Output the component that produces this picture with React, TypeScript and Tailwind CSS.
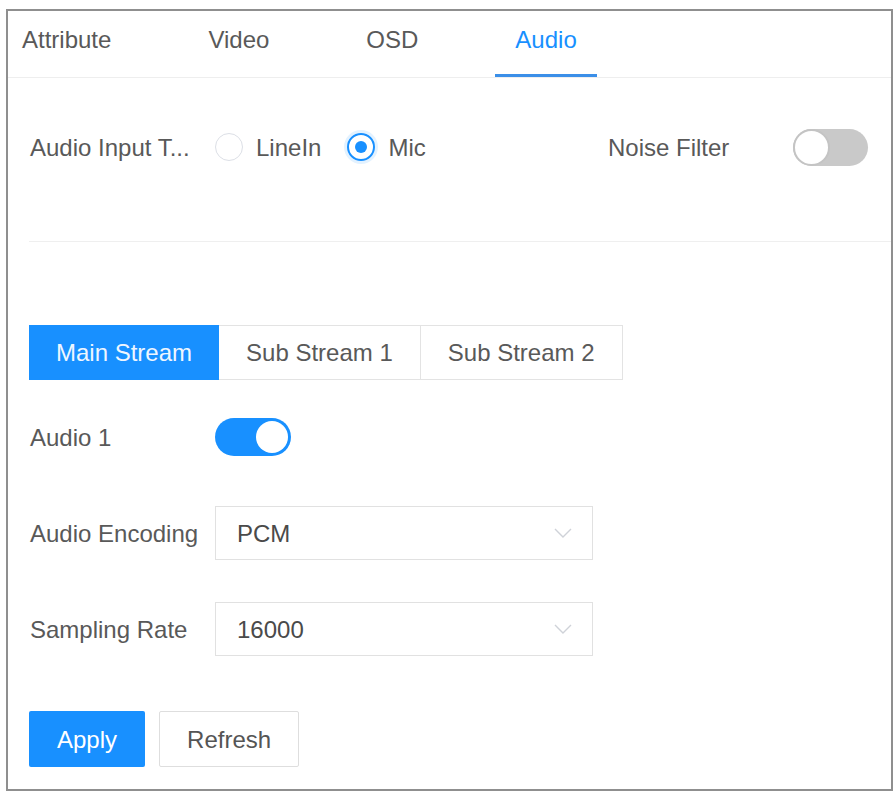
const Radio = ({ checked, label }: { checked?: boolean; label: string }) => {
  return (
    <div className="flex items-center gap-[13px]">
      {checked ? (
        <span className="w-[28px] h-[28px] rounded-full border-2 border-[#1890ff] flex items-center justify-center shadow-[0_0_0_3px_rgba(24,144,255,0.12)]">
          <span className="w-[12px] h-[12px] rounded-full bg-[#1890ff]" />
        </span>
      ) : (
        <span className="w-[28px] h-[28px] rounded-full border border-[#dcdfe6] bg-white" />
      )}
      <span>{label}</span>
    </div>
  );
};

const Toggle = ({ on }: { on?: boolean }) => {
  return on ? (
    <div className="w-[76px] h-[38px] rounded-full bg-[#1890ff] flex items-center justify-end pr-[3px]">
      <span className="w-[32px] h-[32px] rounded-full bg-white" />
    </div>
  ) : (
    <div className="w-[75px] h-[37px] rounded-full bg-[#c9c9c9] flex items-center">
      <span className="w-[37px] h-[37px] rounded-full bg-white border-2 border-[#c4c4c4]" />
    </div>
  );
};

const Select = ({ value }: { value: string }) => {
  return (
    <div className="w-[378px] h-[54px] border border-[#e1e1e1] bg-white flex items-center justify-between pl-[21px] pr-[20px] text-[#4a4a4a]">
      <span>{value}</span>
      <svg width="18" height="10" viewBox="0 0 18 10" fill="none">
        <path d="M1 1 L9 9 L17 1" stroke="#cfd2d8" strokeWidth="1.4" />
      </svg>
    </div>
  );
};

export default function App() {
  const tabs = ["Attribute", "Video", "OSD", "Audio"];
  return (
    <div className="w-[895px] h-[792px] bg-white pt-[9px] pl-[6px] pr-[2px] pb-[1px] font-['Liberation_Sans',Arial,sans-serif] text-[24px] leading-[27px] text-[#595959]">
      <div className="h-full border-2 border-[#8f8f8f] overflow-hidden">
        <div className="h-[67px] border-b border-[#eeeeee] flex pl-[14px] gap-[57px]">
          {tabs.map((t, i) => (
            <div
              key={t}
              className={
                "h-full pt-[15px] border-b-[3px] " +
                (i === 0 ? "pr-5 " : "px-5 ") +
                (t === "Audio" ? "border-[#3b8fe8] text-[#1890ff]" : "border-transparent")
              }
            >
              {t}
            </div>
          ))}
        </div>

        <div className="pl-[21px]">
          <div className="mt-[49px] h-[40px] flex items-center">
            <div className="w-[579px] flex items-center">
              <div className="w-[186px] pl-[1px]">Audio Input T...</div>
              <div className="flex items-center gap-[26px]">
                <Radio label="LineIn" />
                <Radio checked label="Mic" />
              </div>
            </div>
            <div className="w-[185px]">Noise Filter</div>
            <Toggle />
          </div>

          <div className="mt-[74px] border-t border-[#efefef]" />

          <div className="mt-[83px] flex h-[55px]">
            <div className="px-[27px] flex items-center bg-[#1890ff] text-[#eef6ff]">Main Stream</div>
            <div className="px-[27px] flex items-center border border-l-0 border-[#e3e3e3]">Sub Stream 1</div>
            <div className="px-[27px] flex items-center border border-l-0 border-[#e3e3e3]">Sub Stream 2</div>
          </div>

          <div className="mt-[29px] h-[56px] flex items-center">
            <div className="w-[186px] pl-[1px]">Audio 1</div>
            <Toggle on />
          </div>

          <div className="mt-[40px] h-[56px] flex items-center">
            <div className="w-[186px] pl-[1px]">Audio Encoding</div>
            <Select value="PCM" />
          </div>

          <div className="mt-[40px] h-[56px] flex items-center">
            <div className="w-[186px] pl-[1px]">Sampling Rate</div>
            <Select value="16000" />
          </div>

          <div className="mt-[54px] flex gap-[14px]">
            <button className="h-[56px] px-[28px] rounded-[2px] bg-[#1890ff] text-white">Apply</button>
            <button className="h-[56px] px-[27px] rounded-[2px] border border-[#dedede] bg-white text-[#555]">Refresh</button>
          </div>
        </div>
      </div>
    </div>
  );
}
